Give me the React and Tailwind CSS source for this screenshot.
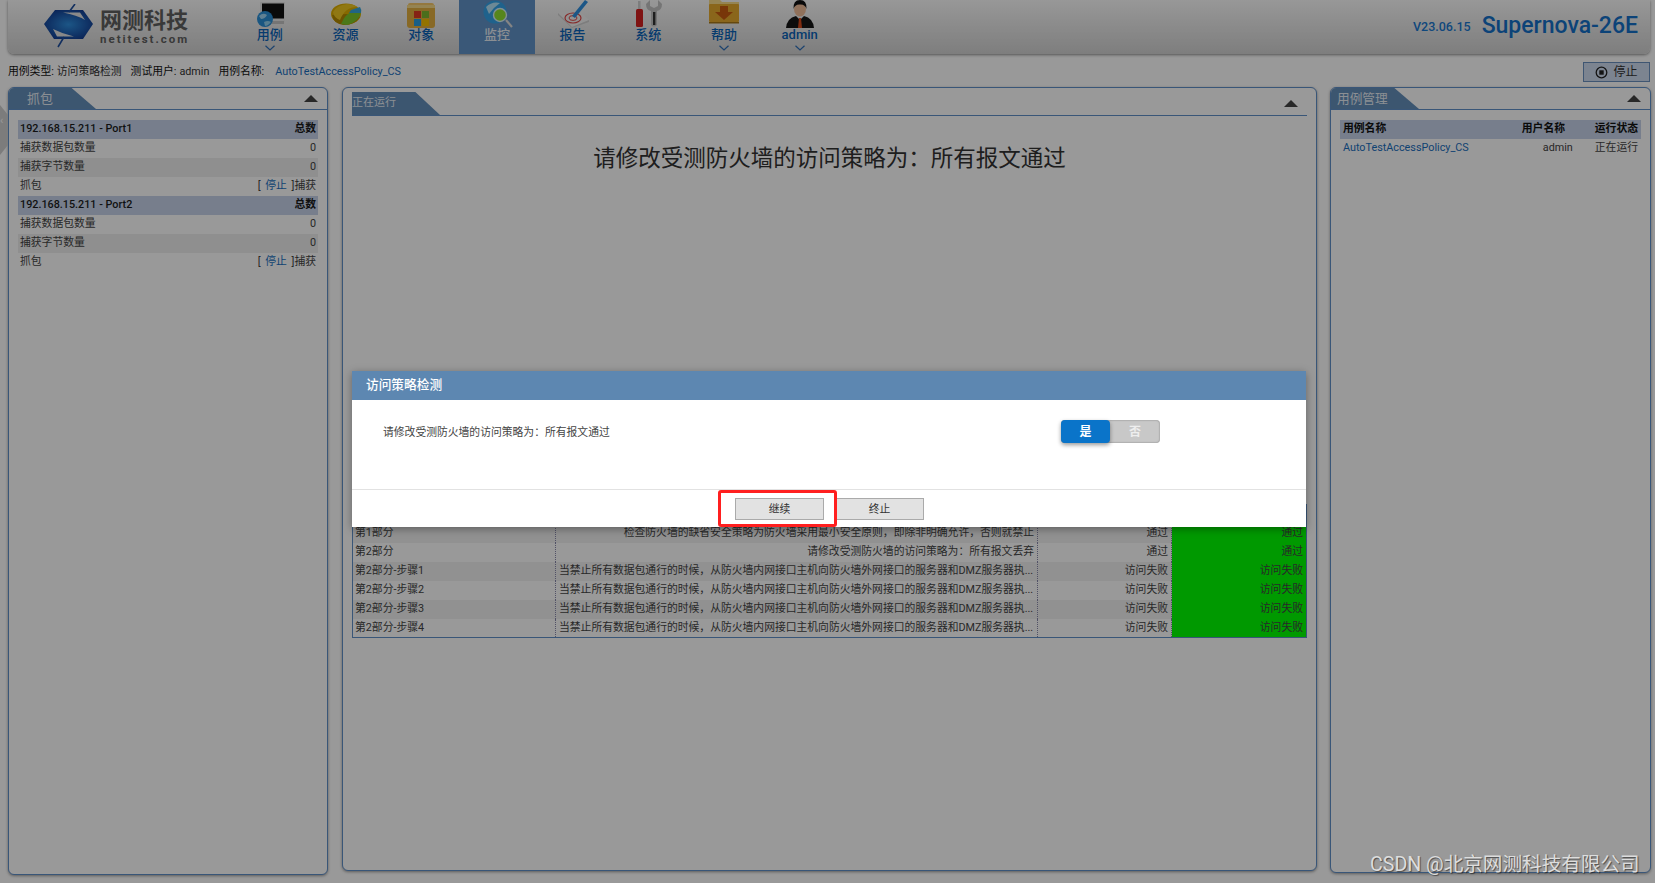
import React from 'react';

const CJK = 'font-["Roboto","Noto_Sans_CJK_SC",sans-serif]';

const Chevron = ({ show }) => (
  <svg width="12" height="6" viewBox="0 0 12 6" className={show ? 'mt-[3px]' : 'mt-[3px] invisible'}>
    <path d="M1.5 0.8 L6 5 L10.5 0.8" fill="none" stroke="#2f6fb8" strokeWidth="1.2" />
  </svg>
);

const IconMonitor = () => (
  <svg width="34" height="28" viewBox="0 0 34 28">
    <rect x="7" y="2" width="25" height="21" rx="1" fill="#e8e8e8" />
    <rect x="9" y="3.5" width="22" height="15" fill="#111" />
    <rect x="14" y="21" width="17" height="3" fill="#c4c4c4" />
    <circle cx="12" cy="19" r="8" fill="#2a8fd8" />
    <path d="M6 16 Q10 12 14 15 Q12 19 8 19 Z" fill="#9fd6f5" />
    <path d="M11 22 Q15 20 18 22 Q15 26 12 26 Z" fill="#8fd0f0" />
  </svg>
);

const IconPie = () => (
  <svg width="34" height="28" viewBox="0 0 34 28">
    <ellipse cx="17" cy="14" rx="15" ry="10.5" fill="#e0b000" />
    <path d="M3 15 Q4 24 15 25 Q26 25 31 17 L17 14 Z" fill="#b58a00" />
    <path d="M12 24 Q16 14 24 11 L32 12 Q30 22 18 25 Z" fill="#7ec82a" />
    <path d="M22 10 L31 7 Q33 10 32 13 L20 13 Z" fill="#38a8dc" />
    <path d="M4 12 Q8 5 18 4 Q25 4 28 7 Q16 7 11 20 Q5 18 4 12Z" fill="#f0c820" />
  </svg>
);

const IconFolderWin = () => (
  <svg width="34" height="28" viewBox="-1 0 34 28">
    <rect x="3" y="3" width="26" height="5" rx="2" fill="#f7c96a" />
    <rect x="2" y="5" width="28" height="23" rx="3" fill="#e3b040" />
    <rect x="2" y="5" width="28" height="3" fill="#f9dc8a" />
    <rect x="9" y="11" width="7" height="7" fill="#e03b24" />
    <rect x="17" y="11" width="7" height="7" fill="#7cb82f" />
    <rect x="9" y="19" width="7" height="7" fill="#2a9fe0" />
    <rect x="17" y="19" width="7" height="7" fill="#f6c000" />
  </svg>
);

const IconSearchGlobe = () => (
  <svg width="34" height="28" viewBox="0 0 34 28">
    <circle cx="15" cy="12" r="11.5" fill="#35a4ea" />
    <path d="M6 7 Q12 1 20 3 Q14 7 9 14 Z" fill="#b6e4fa" />
    <circle cx="20" cy="15" r="6.5" fill="#90e030" stroke="#d9eef8" strokeWidth="1.4" />
    <path d="M26 20 L32 27" stroke="#dcdcdc" strokeWidth="2.2" />
  </svg>
);

const IconReport = () => (
  <svg width="34" height="28" viewBox="0 0 34 28">
    <path d="M2 13 L20 8 L33 20 L16 27 Z" fill="#f4f4f4" />
    <path d="M2 13 L16 27 L33 20 L33 22 L16 28 L2 15 Z" fill="#d0d0d0" />
    <ellipse cx="17" cy="18" rx="8" ry="5" fill="none" stroke="#e04848" strokeWidth="1.2" />
    <ellipse cx="17" cy="18" rx="4" ry="2.4" fill="none" stroke="#e04848" strokeWidth="1" />
    <path d="M16 16 L29 0 L32 2 L19 18 Z" fill="#2f8fe0" />
  </svg>
);

const IconTools = () => (
  <svg width="34" height="28" viewBox="2 0 34 28">
    <rect x="9" y="1" width="2.5" height="10" fill="#d0d0d0" />
    <rect x="7" y="9" width="7" height="18" rx="1.5" fill="#d42020" />
    <path d="M21 0 L21 6 L25 8 L29 6 L29 0 L33 4 Q33 10 28 11 L28 25 Q25 28 22 25 L22 11 Q17 10 17 4 Z" fill="#c4c4c4" />
    <rect x="24" y="12" width="2.4" height="13" fill="#333" />
  </svg>
);

const IconFolderDown = () => (
  <svg width="34" height="28" viewBox="0 2 34 28">
    <path d="M2 1 H12 L15 4 H32 V8 H2 Z" fill="#f9dc8a" />
    <rect x="2" y="6" width="30" height="18" rx="1" fill="#e6ab2e" />
    <rect x="2" y="24" width="30" height="1.5" fill="#a87818" />
    <path d="M13 8 H21 V14 H26 L17 22 L8 14 H13 Z" fill="#c85a10" />
  </svg>
);

const IconUser = () => (
  <svg width="34" height="28" viewBox="0 0 34 28">
    <path d="M3 28 Q4 18 13 16 L21 16 Q30 18 31 28 Z" fill="#161616" />
    <path d="M13 16 L17 20 L21 16 L19 14 H15 Z" fill="#f0f0f0" />
    <path d="M16 18 H18 L19 28 H15 Z" fill="#d84a1c" />
    <ellipse cx="17" cy="9" rx="6" ry="7.5" fill="#f0bd98" />
    <path d="M10.5 9 Q10 0 17 0 Q24 0 23.5 9 Q22 4 17 4.5 Q12 4 10.5 9 Z" fill="#111" />
  </svg>
);

const navItems = [
  { label: '用例', icon: IconMonitor, more: true },
  { label: '资源', icon: IconPie },
  { label: '对象', icon: IconFolderWin },
  { label: '监控', icon: IconSearchGlobe, active: true },
  { label: '报告', icon: IconReport },
  { label: '系统', icon: IconTools },
  { label: '帮助', icon: IconFolderDown, more: true },
  { label: 'admin', icon: IconUser, more: true },
];

const Logo = () => (
  <svg width="52" height="46" viewBox="0 0 52 46" className="shrink-0">
    <defs>
      <radialGradient id="logoGlow" cx="50%" cy="50%" r="55%">
        <stop offset="0%" stopColor="#2f8fe0" />
        <stop offset="100%" stopColor="#133f94" />
      </radialGradient>
    </defs>
    <path d="M12 6 H40 L50 20 L40 35 H11 L1 20 Z" fill="url(#logoGlow)" />
    <path d="M20 8.5 H37 L42 16 Q34 11 20 8.5 Z" fill="#e4e4e4" />
    <path d="M10 25 Q20 30 31 32.5 H14 Z" fill="#e4e4e4" />
    <path d="M32 0 L26 8 M21 33 L15 43" stroke="#1f4f9e" strokeWidth="1.6" />
  </svg>
);

const Triangle = () => (
  <span className="w-0 h-0 border-x-[7px] border-x-transparent border-b-[7px] border-b-[#444]" />
);

const PanelTab = ({ title, className }) => (
  <div
    className={`flex items-center bg-[#648fbb] text-[#e8eef5] ${className}`}
    style={{ clipPath: 'polygon(0 0, 72% 0, 100% 100%, 0 100%)' }}
  >
    {title}
  </div>
);

const PortBlock = ({ name }) => (
  <>
    <div className="flex items-center justify-between h-[19px] px-[2px] bg-[#c6d3e9] text-[#1c1c1c]">
      <span className="font-medium">{name}</span>
      <span className="font-bold">总数</span>
    </div>
    <div className="flex items-center justify-between h-[19px] px-[2px] text-[#444]">
      <span>捕获数据包数量</span>
      <span>0</span>
    </div>
    <div className="flex items-center justify-between h-[19px] px-[2px] bg-[#efefef] text-[#444]">
      <span>捕获字节数量</span>
      <span>0</span>
    </div>
    <div className="flex items-center justify-between h-[19px] px-[2px] text-[#444]">
      <span>抓包</span>
      <span>
        [ <span className="text-[#1a6fc0] mx-[2px]">停止</span> ]捕获
      </span>
    </div>
  </>
);

const stepText = '当禁止所有数据包通行的时候，从防火墙内网接口主机向防火墙外网接口的服务器和DMZ服务器执...';

const rows = [
  { name: '第1部分', desc: '检查防火墙的缺省安全策略为防火墙采用最小安全原则，即除非明确允许，否则就禁止', right: true, want: '通过', got: '通过' },
  { name: '第2部分', desc: '请修改受测防火墙的访问策略为：所有报文丢弃', right: true, want: '通过', got: '通过' },
  { name: '第2部分-步骤1', desc: stepText, want: '访问失败', got: '访问失败' },
  { name: '第2部分-步骤2', desc: stepText, want: '访问失败', got: '访问失败' },
  { name: '第2部分-步骤3', desc: stepText, want: '访问失败', got: '访问失败' },
  { name: '第2部分-步骤4', desc: stepText, want: '访问失败', got: '访问失败' },
];

export default function App() {
  return (
    <div className={`relative w-[1655px] h-[883px] overflow-hidden bg-white text-[10.8px] ${CJK}`}>
      {/* top bar */}
      <header className="flex items-start h-[54px] mx-2 w-[1642px] rounded-b-md bg-gradient-to-b from-[#fdfdfd] to-[#d2d2d2] shadow-[0_1px_3px_rgba(0,0,0,0.45)]">
        <div className="flex items-center w-[224px] pl-[35px] h-full">
          <Logo />
          <div className="ml-[5px] text-[#606060]">
            <div className="text-[22px] leading-[24px] font-bold whitespace-nowrap">网测科技</div>
            <div className="text-[11.5px] leading-[13px] font-bold tracking-[2px] whitespace-nowrap">netitest.com</div>
          </div>
        </div>
        <nav className="flex h-full">
          {navItems.map((item) => (
            <div
              key={item.label}
              className={`flex flex-col items-center w-[75.7px] h-full ${item.active ? 'bg-[#6193c8] text-[#e8eef5]' : 'text-[#0a63b8]'}`}
            >
              <div className="h-[28px] shrink-0"><item.icon /></div>
              <span className="text-[13px] leading-[15px] mt-[-1px] font-medium">{item.label}</span>
              <Chevron show={item.more} />
            </div>
          ))}
        </nav>
        <div className="flex items-center ml-auto h-[50px] pr-[12px] text-[#1a78d0] font-medium">
          <span className="text-[12.5px] mt-[5px] mr-[11px]">V23.06.15</span>
          <span className="text-[23px] text-[#1470c8] leading-none">Supernova-26E</span>
        </div>
      </header>

      {/* case info */}
      <div className="flex items-center h-[20px] mt-[8px] ml-2 w-[1642px] text-[#333]">
        <span className="text-[#111]">用例类型:</span>
        <span className="ml-[3px]">访问策略检测</span>
        <span className="ml-[9px] text-[#111]">测试用户:</span>
        <span className="ml-[3px]">admin</span>
        <span className="ml-[9px] text-[#111]">用例名称:</span>
        <span className="ml-[11px] text-[#1a6fc0]">AutoTestAccessPolicy_CS</span>
        <button className="flex items-center justify-center gap-[5px] ml-auto w-[67px] h-[20px] border border-[#6a90bf] bg-[#cfdcf0] text-[12px] text-[#333]">
          <svg width="13" height="13" viewBox="0 0 13 13">
            <circle cx="6.5" cy="6.5" r="5.3" fill="none" stroke="#222" strokeWidth="1.3" />
            <rect x="4.3" y="4.3" width="4.4" height="4.4" fill="#222" />
          </svg>
          <span>停止</span>
        </button>
      </div>

      {/* panels */}
      <div className="flex items-start mt-[5px] ml-2">
        <section className="w-[320px] h-[788px] border border-[#5f8fc8] rounded-md bg-white shadow-[0_1px_3px_rgba(0,0,0,0.4)] overflow-hidden">
          <div className="flex items-center justify-between h-[22px] border-b border-[#5f8fc8] pr-[9px]">
            <PanelTab title="抓包" className="w-[87px] h-full pl-[18px] text-[13px]" />
            <Triangle />
          </div>
          <div className="px-[9px] pt-[10px]">
            <PortBlock name="192.168.15.211 - Port1" />
            <PortBlock name="192.168.15.211 - Port2" />
          </div>
        </section>

        <section className="w-[975px] h-[784px] ml-[14px] border border-[#5f8fc8] rounded-md bg-white shadow-[0_1px_3px_rgba(0,0,0,0.4)] px-[9px] pt-[4px]">
          <div className="flex items-center justify-between h-[24px] border-b border-[#5f8fc8] pr-[9px]">
            <PanelTab title="正在运行" className="w-[88px] h-full text-[#333] text-[11px] bg-[#88a8cc]" />
            <Triangle />
          </div>
          <h1 className="h-[388px] pt-[26px] text-center text-[22.5px] leading-[32px] font-normal text-[#333]">
            请修改受测防火墙的访问策略为：所有报文通过
          </h1>
          <table className="w-[954px] table-fixed border-collapse border border-[#5f8fc8] text-[#444]">
            <colgroup>
              <col className="w-[203px]" />
              <col className="w-[482px]" />
              <col className="w-[134px]" />
              <col className="w-[135px]" />
            </colgroup>
            <tbody>
              <tr className="h-[19px] bg-[#c6d3e9]">
                <td colSpan={4} />
              </tr>
              {rows.map((row, i) => (
                <tr key={row.name} className={`h-[19px] ${i % 2 === 0 ? 'bg-[#f2f2f2]' : 'bg-white'}`}>
                  <td className="px-[2px] border-r border-dotted border-[#88a] whitespace-nowrap">{row.name}</td>
                  <td className={`px-[3px] border-r border-dotted border-[#88a] whitespace-nowrap ${row.right ? 'text-right' : 'text-left'}`}>{row.desc}</td>
                  <td className="px-[3px] border-r border-dotted border-[#88a] text-right whitespace-nowrap">{row.want}</td>
                  <td className="px-[3px] text-right whitespace-nowrap bg-[#00ff00]">{row.got}</td>
                </tr>
              ))}
            </tbody>
          </table>
        </section>

        <section className="w-[321px] h-[786px] ml-[13px] border border-[#5f8fc8] rounded-md bg-white shadow-[0_1px_3px_rgba(0,0,0,0.4)] overflow-hidden">
          <div className="flex items-center justify-between h-[22px] border-b border-[#5f8fc8] pr-[9px]">
            <PanelTab title="用例管理" className="w-[88px] h-full pl-[6px] text-[12.7px]" />
            <Triangle />
          </div>
          <div className="px-[9px] pt-[10px]">
            <div className="flex items-center h-[19px] px-[3px] bg-[#c6d3e9] text-[#111] font-bold">
              <span className="flex-1">用例名称</span>
              <span className="w-[73px]">用户名称</span>
              <span>运行状态</span>
            </div>
            <div className="flex items-center h-[19px] px-[3px] text-[#444]">
              <span className="flex-1 text-[#1a6fc0]">AutoTestAccessPolicy_CS</span>
              <span className="w-[73px] pl-[21px]">admin</span>
              <span>正在运行</span>
            </div>
          </div>
        </section>
      </div>

      {/* sidebar handle */}
      <div
        className="absolute left-0 top-[105px] w-[8px] h-[50px] pt-[8px] bg-[#cfcfcf] text-white text-[11px] leading-[16px]"
        style={{ clipPath: 'polygon(0 0, 100% 20%, 100% 80%, 0 100%)' }}
      >
        ‹
      </div>

      {/* dim layer */}
      <div className="absolute inset-0 bg-black/40" />

      {/* dialog */}
      <div className="absolute left-[352px] top-[371px] w-[954px] h-[156px] flex flex-col bg-white shadow-[0_2px_8px_rgba(0,0,0,0.35)]">
        <div className="flex items-center h-[29px] pl-[14px] pb-[2px] bg-[#5d87b1] text-white text-[12.7px] font-medium">访问策略检测</div>
        <div className="flex items-start h-[90px] border-b border-[#e2e2e2] text-[#444]">
          <span className="ml-[31px] mt-[25px] w-[678px]">请修改受测防火墙的访问策略为：所有报文通过</span>
          <div className="flex mt-[20px] w-[99px] h-[23px] rounded-[4px] bg-[#c8c8c8] text-[12px] font-bold shadow-[inset_0_0_2px_rgba(0,0,0,0.4)]">
            <span className="flex items-center justify-center w-[49px] rounded-[4px] bg-[#0a74c9] text-white shadow-[0_2px_4px_rgba(0,0,0,0.4)]">是</span>
            <span className="flex items-center justify-center flex-1 text-[#eee]">否</span>
          </div>
        </div>
        <div className="flex items-start flex-1 pl-[383px] pt-[8px] text-[#333]">
          <button className="w-[89px] h-[22px] pt-[2px] border border-[#aaa] bg-[#e2e2e2]">继续</button>
          <button className="w-[89px] h-[22px] pt-[2px] ml-[11px] border border-[#aaa] bg-[#e2e2e2]">终止</button>
        </div>
      </div>

      {/* red callout */}
      <div className="absolute left-[718px] top-[490px] w-[119px] h-[37px] border-[3px] border-[#ff1f1f] rounded-[3px]" />

      {/* watermark */}
      <div className="absolute left-[1370px] top-[853px] text-[19.6px] leading-[24px] text-[#dddddd] whitespace-nowrap [text-shadow:1px_1px_1px_rgba(0,0,0,0.5)]">
        CSDN @北京网测科技有限公司
      </div>
    </div>
  );
}
